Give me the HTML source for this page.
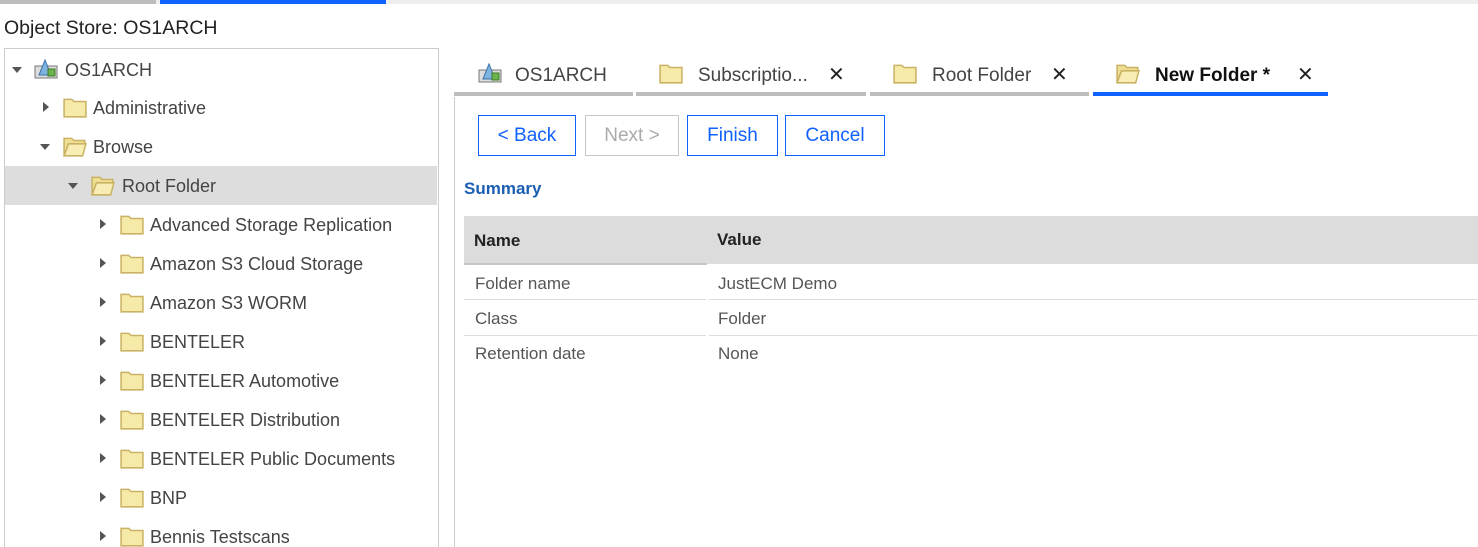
<!DOCTYPE html>
<html><head><meta charset="utf-8"><style>
*{margin:0;padding:0;box-sizing:border-box}
html,body{width:1478px;height:547px;overflow:hidden}
body{background:#fff;font-family:"Liberation Sans",sans-serif;color:#333;position:relative}
.a{position:absolute}
.row{position:absolute;left:5px;width:432px;height:39px;font-size:18px;color:#444}
.row span{position:absolute;top:10px}
.tri-r{position:absolute;width:0;height:0;border-top:5px solid transparent;border-bottom:5px solid transparent;border-left:6px solid #555;top:14px}
.tri-d{position:absolute;width:0;height:0;border-left:5px solid transparent;border-right:5px solid transparent;border-top:6px solid #555;top:17px}
.fold{position:absolute;top:8px;width:24px;height:22px}
.tab{position:absolute;top:60px;height:36px;font-size:19px;color:#444;border-bottom:4px solid #bdbdbd}
.btn{position:absolute;top:115px;height:41px;border:1px solid #0f62fe;color:#0f62fe;font-size:19px;text-align:center;line-height:40px}
.td{position:absolute;font-size:17px;color:#555}
.hl{position:absolute;height:1px;background:#ddd}
</style></head><body>
<div class="a" style="left:0;top:0;width:1478px;height:4px;background:#eee"></div>
<div class="a" style="left:0;top:0;width:156px;height:4px;background:#bdbdbd"></div>
<div class="a" style="left:160px;top:0;width:226px;height:4px;background:#0f62fe"></div>
<div class="a" style="left:4px;top:17px;font-size:19.5px;color:#222">Object Store: OS1ARCH</div>
<div class="a" style="left:4px;top:48px;width:435px;height:520px;border:1px solid #ccc"></div>
<svg width="0" height="0" style="position:absolute"><defs>
<symbol id="fc" viewBox="0 0 22 20"><path d="M1 3h7l2 2h11v14H1z" fill="#f6eaa9" stroke="#c9b263" stroke-width="1.4"/></symbol>
<symbol id="fo" viewBox="0 0 22 20"><path d="M1 3h7l2 2h10v3H5L1 19z" fill="#efdf92" stroke="#c9b263" stroke-width="1.4"/><path d="M5 8h16l-3 11H1z" fill="#f8eeb5" stroke="#c9b263" stroke-width="1.4"/></symbol>
<symbol id="os" viewBox="0 0 24 20"><rect x="1" y="7" width="22" height="12" fill="#ddd" stroke="#777"/><path d="M11 1L5 16h12z" fill="#7fb3e0" stroke="#3a6ea5"/><rect x="14" y="10" width="7" height="7" fill="#6bb34a" stroke="#3d7a28"/></symbol>
</defs></svg>
<div class="row" style="top:50px"><div class="tri-d" style="left:7px"></div><svg class="fold" style="left:29px"><use href="#os"/></svg><span style="left:60px">OS1ARCH</span></div>
<div class="row" style="top:88px"><div class="tri-r" style="left:38px"></div><svg class="fold" style="left:58px"><use href="#fc"/></svg><span style="left:88px">Administrative</span></div>
<div class="row" style="top:127px"><div class="tri-d" style="left:35px"></div><svg class="fold" style="left:58px"><use href="#fo"/></svg><span style="left:88px">Browse</span></div>
<div class="row" style="top:166px;background:#ddd"><div class="tri-d" style="left:63px"></div><svg class="fold" style="left:86px"><use href="#fo"/></svg><span style="left:117px">Root Folder</span></div>
<div class="row" style="top:205px"><div class="tri-r" style="left:95px"></div><svg class="fold" style="left:115px"><use href="#fc"/></svg><span style="left:145px">Advanced Storage Replication</span></div>
<div class="row" style="top:244px"><div class="tri-r" style="left:95px"></div><svg class="fold" style="left:115px"><use href="#fc"/></svg><span style="left:145px">Amazon S3 Cloud Storage</span></div>
<div class="row" style="top:283px"><div class="tri-r" style="left:95px"></div><svg class="fold" style="left:115px"><use href="#fc"/></svg><span style="left:145px">Amazon S3 WORM</span></div>
<div class="row" style="top:322px"><div class="tri-r" style="left:95px"></div><svg class="fold" style="left:115px"><use href="#fc"/></svg><span style="left:145px">BENTELER</span></div>
<div class="row" style="top:361px"><div class="tri-r" style="left:95px"></div><svg class="fold" style="left:115px"><use href="#fc"/></svg><span style="left:145px">BENTELER Automotive</span></div>
<div class="row" style="top:400px"><div class="tri-r" style="left:95px"></div><svg class="fold" style="left:115px"><use href="#fc"/></svg><span style="left:145px">BENTELER Distribution</span></div>
<div class="row" style="top:439px"><div class="tri-r" style="left:95px"></div><svg class="fold" style="left:115px"><use href="#fc"/></svg><span style="left:145px">BENTELER Public Documents</span></div>
<div class="row" style="top:478px"><div class="tri-r" style="left:95px"></div><svg class="fold" style="left:115px"><use href="#fc"/></svg><span style="left:145px">BNP</span></div>
<div class="row" style="top:517px"><div class="tri-r" style="left:95px"></div><svg class="fold" style="left:115px"><use href="#fc"/></svg><span style="left:145px">Bennis Testscans</span></div>

<div class="a" style="left:454px;top:97px;width:1px;height:450px;background:#ccc"></div>
<div class="tab" style="left:454px;width:179px"><svg class="fold" style="left:24px;top:2px"><use href="#os"/></svg><span class="a" style="left:61px;top:5px">OS1ARCH</span></div>
<div class="tab" style="left:636px;width:230px"><svg class="fold" style="left:23px;top:2px"><use href="#fc"/></svg><span class="a" style="left:62px;top:5px">Subscriptio...</span><span class="a" style="left:192px;top:2px;font-size:20px;color:#222">✕</span></div>
<div class="tab" style="left:870px;width:219px"><svg class="fold" style="left:23px;top:2px"><use href="#fc"/></svg><span class="a" style="left:62px;top:5px">Root Folder</span><span class="a" style="left:181px;top:2px;font-size:20px;color:#222">✕</span></div>
<div class="tab" style="left:1093px;width:235px;border-bottom-color:#0f62fe"><svg class="fold" style="left:23px;top:2px"><use href="#fo"/></svg><span class="a" style="left:62px;top:5px;font-weight:bold;color:#111">New Folder *</span><span class="a" style="left:204px;top:2px;font-size:20px;color:#222">✕</span></div>

<div class="btn" style="left:478px;width:98px">&lt; Back</div>
<div class="btn" style="left:585px;width:94px;border-color:#c6c6c6;color:#aaa">Next &gt;</div>
<div class="btn" style="left:687px;width:91px">Finish</div>
<div class="btn" style="left:785px;width:100px">Cancel</div>
<div class="a" style="left:464px;top:179px;font-size:17px;font-weight:bold;color:#1a5fb4">Summary</div>

<div class="a" style="left:464px;top:216px;width:1014px;height:48px;background:#dcdcdc"></div>
<div class="a" style="left:464px;top:263px;width:243px;height:2px;background:#c6c6c6"></div>
<div class="td" style="left:474px;top:231px;font-weight:bold;color:#222">Name</div>
<div class="td" style="left:717px;top:230px;font-weight:bold;color:#222">Value</div>
<div class="td" style="left:475px;top:274px">Folder name</div><div class="td" style="left:718px;top:274px">JustECM Demo</div>
<div class="hl" style="left:464px;top:299px;width:242px"></div><div class="hl" style="left:709px;top:299px;width:769px"></div>
<div class="td" style="left:475px;top:309px">Class</div><div class="td" style="left:718px;top:309px">Folder</div>
<div class="hl" style="left:464px;top:335px;width:242px"></div><div class="hl" style="left:709px;top:335px;width:769px"></div>
<div class="td" style="left:475px;top:344px">Retention date</div><div class="td" style="left:718px;top:344px">None</div>
</body></html>
